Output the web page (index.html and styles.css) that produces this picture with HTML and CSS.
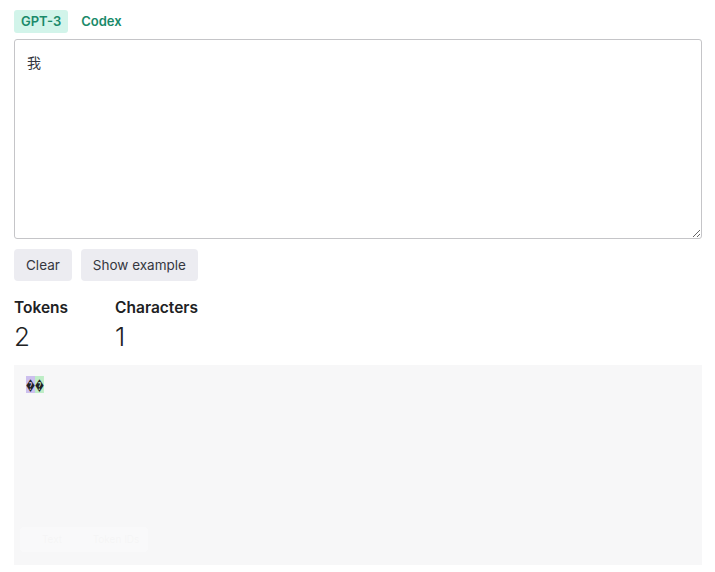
FILE: index.html
```html
<!DOCTYPE html>
<html lang="zh">
<head>
    <meta charset="UTF-8">
    <title>Tokenizer</title>
    <link rel="stylesheet" href="styles.css">
</head>
<body>
    <div class="page">
        <div class="tabs">
            <span class="tab active">GPT-3</span>
            <span class="tab">Codex</span>
        </div>

        <textarea class="input">我</textarea>

        <div class="actions">
            <button class="btn">Clear</button>
            <button class="btn">Show example</button>
        </div>

        <div class="stats">
            <div class="stat">
                <div class="stat-label">Tokens</div>
                <div class="stat-value">2</div>
            </div>
            <div class="stat">
                <div class="stat-label">Characters</div>
                <div class="stat-value">1</div>
            </div>
        </div>

        <div class="output">
            <div class="tokens"><span class="tok tok-0">&#xFFFD;</span><span class="tok tok-1">&#xFFFD;</span></div>
            <!-- 底部切换按钮，截图里几乎看不见 -->
            <div class="toggle">
                <span class="toggle-item">Text</span>
                <span class="toggle-item">Token IDs</span>
            </div>
        </div>
    </div>
</body>
</html>
```

FILE: styles.css
```css
/* 基础 */
body {
    margin: 0;
    background: #ffffff;
    color: #353740;
    font-family: Inter, "Noto Sans", "Noto Sans CJK SC", sans-serif;
}
.page {
    padding: 10px 13px 0 14px;
}

/* 顶部标签 */
.tabs {
    display: flex;
    gap: 6px;
    height: 23px;
}
.tab {
    padding: 0 7px;
    line-height: 23px;
    font-size: 13px;
    font-weight: 600;
    color: #1a8a6a;
    border-radius: 3px;
}
.tab.active {
    background-color: #d2f4ea;
}

/* 输入框 */
.input {
    display: block;
    box-sizing: border-box;
    width: 100%;
    height: 200px;
    margin-top: 6px;
    padding: 13px 12px;
    border: 1px solid #c5c5c8;
    border-radius: 3px;
    font-family: Inter, "Noto Sans CJK SC", sans-serif;
    font-size: 14px;
    line-height: 20px;
    color: #353740;
    resize: vertical;
}

/* 按钮 */
.actions {
    display: flex;
    gap: 9px;
    margin-top: 10px;
}
.btn {
    height: 32px;
    padding: 0 12px;
    border: none;
    border-radius: 4px;
    background-color: #ececf1;
    color: #353740;
    font-family: Inter, sans-serif;
    font-size: 13.5px;
}

/* 统计 */
.stats {
    display: flex;
    gap: 47px;
    margin-top: 17px;
}
.stat-label {
    font-size: 15.5px;
    font-weight: 600;
    line-height: 20px;
    color: #202123;
}
.stat-value {
    margin-top: 3px;
    font-size: 26px;
    font-weight: 300;
    line-height: 32px;
    color: #202123;
}

/* 输出区域 */
.output {
    position: relative;
    height: 200px;
    margin-top: 12px;
    padding: 12px;
    box-sizing: border-box;
    background-color: #f7f7f8;
}
.tokens {
    font-size: 14px;
    line-height: 16px;
    color: #202123;
    transform: scaleX(0.64);
    transform-origin: left;
}
.tok-0 {
    background-color: rgba(107, 64, 216, 0.3);
}
.tok-1 {
    background-color: rgba(104, 222, 122, 0.4);
}
.toggle {
    position: absolute;
    left: 6px;
    bottom: 13px;
    display: flex;
    width: 128px;
    height: 25px;
    background-color: #ffffff;
    opacity: 0.35;
    border-radius: 4px;
}
.toggle-item {
    flex: 1;
    font-size: 10px;
    line-height: 25px;
    text-align: center;
    color: #f3f3f3;
}
```
